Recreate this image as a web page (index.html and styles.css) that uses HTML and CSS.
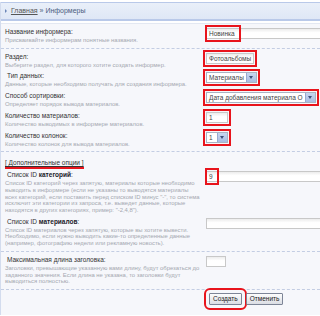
FILE: index.html
```html
<!DOCTYPE html>
<html lang="ru">
<head>
    <meta charset="UTF-8">
    <title>Информеры</title>
    <link rel="stylesheet" href="styles.css">
</head>
<body>
    <div class="panel">
        <div class="crumbs">
            <span class="arrow"></span>
            <a href="#">Главная</a> &raquo; Информеры
        </div>

        <div class="body">
            <div class="row">
                <div class="lbl">
                    <div class="name">Название информера:</div>
                    <div class="desc">Присваивайте информерам понятные названия.</div>
                </div>
                <div class="fld"><span class="fake wide"><span class="hl">Новинка</span></span></div>
            </div>
            <div class="sep"></div>

            <div class="row">
                <div class="lbl">
                    <div class="name">Раздел:</div>
                    <div class="desc">Выберите раздел, для которого хотите создать информер.</div>
                </div>
                <div class="fld"><span class="fake mark">Фотоальбомы</span></div>
            </div>
            <div class="row">
                <div class="lbl">
                    <div class="name ind">Тип данных:</div>
                    <div class="desc">Данные, которые необходимо получать для создания информера.</div>
                </div>
                <div class="fld"><span class="sel mark">Материалы<i class="drop"></i></span></div>
            </div>
            <div class="row">
                <div class="lbl">
                    <div class="name">Способ сортировки:</div>
                    <div class="desc">Определяет порядок вывода материалов.</div>
                </div>
                <div class="fld"><span class="sel mark long">Дата добавления материала О<i class="drop"></i></span></div>
            </div>
            <div class="row">
                <div class="lbl">
                    <div class="name">Количество материалов:</div>
                    <div class="desc">Количество выводимых в информере материалов.</div>
                </div>
                <div class="fld"><span class="fake num mark">1</span></div>
            </div>
            <div class="row">
                <div class="lbl">
                    <div class="name">Количество колонок:</div>
                    <div class="desc">Количество колонок для вывода материалов.</div>
                </div>
                <div class="fld"><span class="sel small mark">1<i class="drop"></i></span></div>
            </div>
            <div class="sep"></div>

            <div class="extra"><a href="#">[ Дополнительные опции ]</a></div>

            <div class="row">
                <div class="lbl">
                    <div class="name ind">Список ID <b>категорий</b>:</div>
                    <div class="desc">Список ID категорий через запятую, материалы которые необходимо выводить в информере (если не указаны то выводятся материалы всех категорий, если поставить перед списком ID минус "-", то система исключит эти категории из запроса, т.е. выведет данные, которые находятся в других категориях, пример: "-2,4,8").</div>
                </div>
                <div class="fld"><span class="fake wide"><span class="hl">9</span></span></div>
            </div>
            <div class="row">
                <div class="lbl">
                    <div class="name ind">Список ID <b>материалов</b>:</div>
                    <div class="desc">Список ID материалов через запятую, которые вы хотите вывести. Необходимо, если нужно выводить какие-то определенные данные (например, фотографию недели или рекламную новость).</div>
                </div>
                <div class="fld"><span class="fake wide"></span></div>
            </div>
            <div class="sep"></div>

            <div class="row">
                <div class="lbl">
                    <div class="name ind">Максимальная длина заголовка:</div>
                    <div class="desc">Заголовки, превышающие указанную вами длину, будут обрезаться до заданного значения. Если длина не указана, то заголовки будут выводиться полностью.</div>
                </div>
                <div class="fld"><span class="fake tiny"></span></div>
            </div>
            <div class="sep"></div>

            <div class="buttons">
                <button type="button" class="mark-btn">Создать</button>
                <button type="button">Отменить</button>
            </div>
        </div>
    </div>
</body>
</html>
```

FILE: styles.css
```css
html {
    overflow: hidden;
}

body {
    margin: 0;
    background-color: #fff;
    font-family: 'Liberation Sans', Arial, sans-serif;
}

.panel {
    margin-top: 2px;
    border-left: 1px solid #d3dcee;
}

.crumbs {
    height: 16px;
    line-height: 16px;
    padding-left: 4px;
    font-size: 7px;
    color: #4a5c80;
    background: linear-gradient(#e9eff9, #dfe7f6);
    border-top: 1px solid #b9c9e9;
    border-bottom: 2px solid #b9c9e9;
}

.crumbs a {
    color: #555;
}

.arrow {
    display: inline-block;
    border-left: 2px solid #6b86b8;
    border-top: 2px solid transparent;
    border-bottom: 2px solid transparent;
    margin-right: 2px;
    vertical-align: middle;
}

.body {
    margin-top: 2px;
    border-top: 1px solid #e3e8f2;
    background-color: #f6f7fb;
    padding: 2px 0 10px 4px;
}

.row {
    display: flex;
    padding: 1px 0 2px;
}

.lbl {
    width: 195px;
    margin-right: 6px;
    flex-shrink: 0;
}

.name {
    font-size: 6.5px;
    line-height: 10px;
    color: #333;
}

.name.ind {
    padding-left: 2px;
}

.name b {
    color: #1a1a2a;
}

.desc {
    font-size: 5.9px;
    line-height: 6.7px;
    color: #a4a7b0;
}

.fld {
    flex: 1;
    padding-top: 1px;
    font-size: 0;
    line-height: 0;
    white-space: nowrap;
}

.fake, .sel {
    box-sizing: border-box;
    display: inline-block;
    height: 11px;
    line-height: 9px;
    font-size: 6.5px;
    color: #444;
    padding: 0 2px;
    background: linear-gradient(#ececec, #fff 40%);
    border: 1px solid #c8c8c8;
    vertical-align: top;
    white-space: nowrap;
}

.wide {
    width: 140px;
}

.fake {
    min-width: 46px;
}

.fake.num {
    min-width: 0;
    width: 22px;
}

.fake.tiny {
    min-width: 0;
    width: 20px;
}

.sel {
    position: relative;
    padding-right: 12px;
    background: #fff;
    border-color: #a9b3c3;
}

.sel.long {
    width: 110px;
    overflow: hidden;
}

.sel.small {
    width: 22px;
}

.drop {
    position: absolute;
    right: 0;
    top: 0;
    width: 9px;
    height: 9px;
    background: linear-gradient(#c8d6f0, #a9bde3);
    border-left: 1px solid #98aad0;
}

.drop::after {
    content: '';
    position: absolute;
    left: 2px;
    top: 3px;
    border-top: 3px solid #3b4f7a;
    border-left: 2.5px solid transparent;
    border-right: 2.5px solid transparent;
}

.mark {
    outline: 2px solid #e8141c;
    outline-offset: 1px;
}

.hl {
    display: inline-block;
    padding-right: 2px;
    outline: 2px solid #e8141c;
    outline-offset: 2px;
}

.sep {
    border-top: 1px dashed #c3cde3;
    margin: 2px 0 2px -4px;
}

.extra {
    font-size: 6.5px;
    line-height: 9px;
    padding: 4px 0 0;
}

.extra a {
    color: #333;
    display: inline-block;
    border-bottom: 2px solid #e8141c;
}

.buttons {
    padding: 1px 0 0 204px;
    display: flex;
    gap: 4px;
}

button {
    font-family: 'Liberation Sans', Arial, sans-serif;
    font-size: 6.5px;
    height: 12px;
    line-height: 9px;
    padding: 0 3px;
    color: #222;
    background: linear-gradient(#fdfdfd, #dadde4);
    border: 1px solid #7d8597;
    border-radius: 1px;
}

.mark-btn {
    outline: 2px solid #e8141c;
    outline-offset: 3px;
}
```
